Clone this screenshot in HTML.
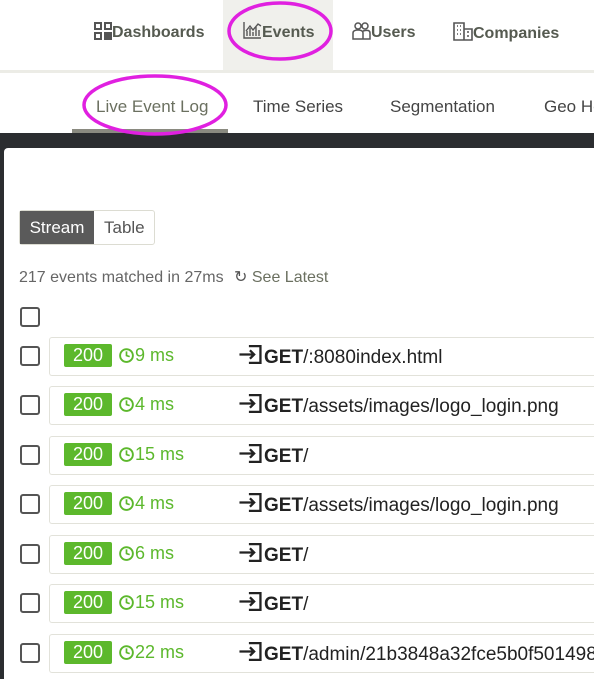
<!DOCTYPE html>
<html><head><style>
*{margin:0;padding:0;box-sizing:border-box}
html,body{width:594px;height:679px;overflow:hidden}
body{background:#fff;font-family:"Liberation Sans",Arial,sans-serif;position:relative}
#w{position:absolute;left:0;top:0;width:594px;height:679px;overflow:hidden}
.a{position:absolute}
.nav{font-weight:bold;font-size:16px;color:#555a50;top:22px;white-space:nowrap}
.sub{font-size:17px;color:#444;top:97px;white-space:nowrap}
.cb{position:absolute;left:20px;width:20px;height:20px;border:2px solid #555;border-radius:3px;background:#fff}
.row{position:absolute;left:49px;width:545px;height:39px;border:1px solid #e2e2da;border-right:none;border-radius:3px 0 0 3px;background:#fff;overflow:hidden}
.badge{position:absolute;left:14px;top:6px;width:48px;height:23px;background:#5cb82c;color:#fff;font-size:18px;text-align:center;line-height:23px;border-radius:2px}
.ms{position:absolute;left:68px;top:7px;color:#5cb82c;font-size:18px;white-space:nowrap}
.get{position:absolute;left:188px;top:6px;font-size:19px;color:#222;white-space:nowrap}
</style></head><body><div id="w">
<div class="a" style="left:223px;top:0;width:110px;height:70px;background:#f0f0ec"></div>
<div class="a" style="left:0;top:70px;width:594px;height:3px;background:#ecece6"></div>
<div class="a nav" style="left:94px"><span style="display:inline-block;width:18px;height:18px;vertical-align:-3px;position:relative"><span class="a" style="left:0;top:0;width:8px;height:8px;border:2px solid #555"></span><span class="a" style="left:10px;top:0;width:8px;height:8px;border:2px solid #555"></span><span class="a" style="left:0;top:10px;width:8px;height:8px;border:2px solid #555"></span><span class="a" style="left:10px;top:10px;width:8px;height:8px;background:#555"></span></span>Dashboards</div>
<div class="a nav" style="left:243px"><svg width="19" height="17" viewBox="0 0 19 17" style="vertical-align:-2px"><path d="M1 0V16H18M4 14V9M7 14V6M10 14V10M13 14V5M16 14V8M3 9L7 4L10 8L15 2L18 4" stroke="#555" stroke-width="1.4" fill="none"/></svg>Events</div>
<div class="a nav" style="left:352px"><svg width="19" height="18" viewBox="0 0 19 18" style="vertical-align:-3px"><circle cx="6" cy="4" r="3" stroke="#555" stroke-width="1.5" fill="none"/><circle cx="13" cy="4" r="3" stroke="#555" stroke-width="1.5" fill="none"/><path d="M1 17V11Q1 8 6 8Q11 8 11 11V17ZM11 9Q18 7 18 11V17H11" stroke="#555" stroke-width="1.5" fill="none"/></svg>Users</div>
<div class="a nav" style="left:453px"><svg width="20" height="19" viewBox="0 0 20 19" style="vertical-align:-3px"><path d="M1 18V1H11V18ZM11 7H19V18H11M4 4H5M7 4H8M4 8H5M7 8H8M4 12H5M7 12H8M14 10H16M14 14H16" stroke="#555" stroke-width="1.6" fill="none"/></svg>Companies</div>
<div class="a sub" style="left:96px;color:#6b7060">Live Event Log</div>
<div class="a sub" style="left:253px">Time Series</div>
<div class="a sub" style="left:390px">Segmentation</div>
<div class="a sub" style="left:544px;width:50px;overflow:hidden">Geo Heatmap</div>
<div class="a" style="left:72px;top:129px;width:156px;height:4px;background:#8a8a80"></div>
<div class="a" style="left:0;top:133px;width:594px;height:546px;background:#2b2d30"></div>
<div class="a" style="left:4px;top:148px;width:590px;height:531px;background:#fff;border-radius:4px 0 0 0"></div>
<div class="a" style="left:19px;top:210px;width:136px;height:35px;border:1px solid #dcdcd2;border-radius:3px;background:#fff"></div>
<div class="a" style="left:20px;top:211px;width:74px;height:33px;background:#5a5a5a;color:#fff;font-size:17px;line-height:33px;text-align:center">Stream</div>
<div class="a" style="left:104px;top:218px;font-size:17px;color:#555">Table</div>
<div class="a" style="left:19px;top:267px;font-size:16px;color:#666;white-space:nowrap">217 events matched in 27ms <span style="color:#555;margin-left:6px">↻</span> <span style="color:#6b7060">See Latest</span></div>
<div class="cb" style="top:307px"></div>
<div id="rows"></div>
<svg class="a" style="left:0;top:0" width="594" height="140"><ellipse cx="280" cy="31" rx="51" ry="28" stroke="#e020e0" stroke-width="3.5" fill="none"/><ellipse cx="155" cy="105" rx="71" ry="29" stroke="#e020e0" stroke-width="3.5" fill="none"/></svg>
</div>
<script>
var d=[["9 ms","/:8080index.html"],["4 ms","/assets/images/logo_login.png"],["15 ms","/"],["4 ms","/assets/images/logo_login.png"],["6 ms","/"],["15 ms","/"],["22 ms","/admin/21b3848a32fce5b0f501498"]];
var ys=[337,386,436,485,535,584,634],h="";
d.forEach(function(r,i){var y=ys[i];
h+='<div class="cb" style="top:'+(y+9)+'px"></div><div class="row" style="top:'+y+'px"><div class="badge">200</div><div class="ms"><svg width="17" height="17" viewBox="0 0 16 16" style="vertical-align:-2px"><circle cx="8" cy="9" r="6" stroke="#5cb82c" stroke-width="1.8" fill="none"/><path d="M8 5V9L11 10" stroke="#5cb82c" stroke-width="1.6" fill="none"/></svg>'+r[0]+'</div><div class="get"><svg width="26" height="21" viewBox="0 0 24 20" style="vertical-align:-2px"><path d="M1 10H15M11 6L15 10L11 14M10 2H21V18H10" stroke="#222" stroke-width="2.2" fill="none"/></svg><b>GET</b>'+r[1]+'</div></div>';});
document.getElementById("rows").innerHTML=h;
</script>
</body></html>
